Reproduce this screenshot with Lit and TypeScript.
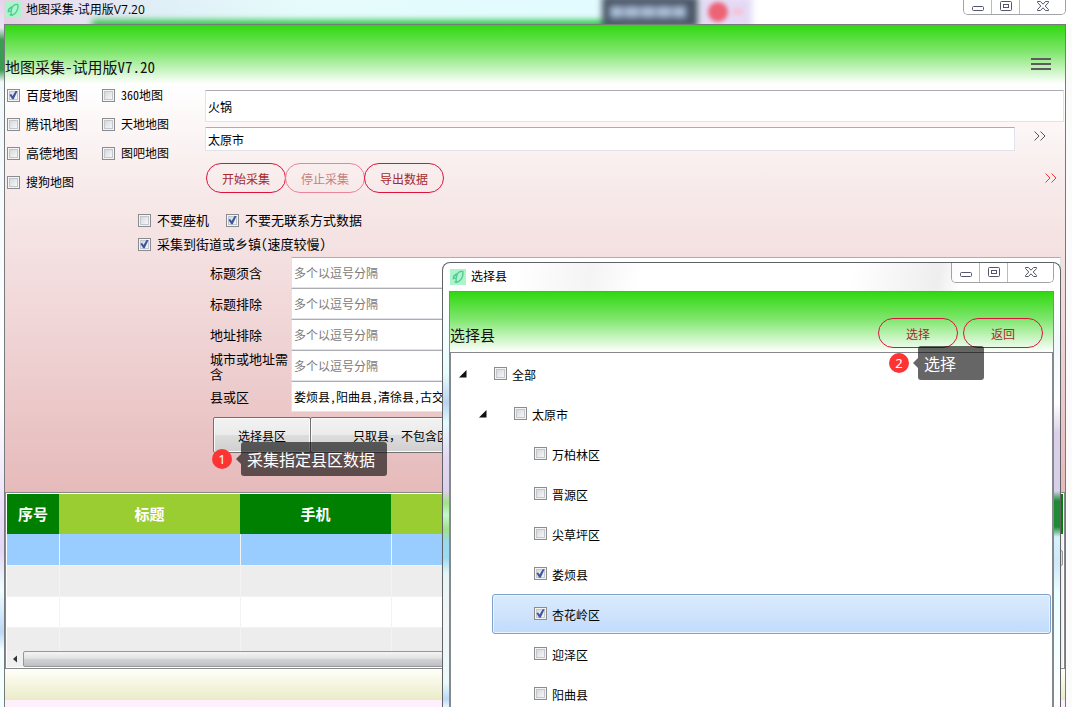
import { LitElement, html, css, svg } from "lit";
import { customElement, property } from "lit/decorators.js";
import { classMap } from "lit/directives/class-map.js";

const FONT = css`"Noto Sans CJK SC", "Liberation Sans", sans-serif`;

const controls = css`
  * { box-sizing: border-box; }
  button { font: inherit; color: inherit; margin: 0; padding: 0; border: 0; background: none; }
  .check { display: inline-flex; align-items: center; gap: 6px; white-space: nowrap; }
  .check input {
    appearance: none; flex: none; position: relative; width: 13px; height: 13px; margin: 0;
    border: 1px solid #8b8c8d; box-shadow: inset 0 0 0 1px #f4f4f4, inset 0 0 0 2px #c3c7cd;
    background: linear-gradient(135deg, #ccd0d6, #f8f8f8 85%);
  }
  .check input:checked::before {
    content: ""; position: absolute; inset: 1px; background: #3f55a0;
    clip-path: polygon(4% 48%, 24% 40%, 40% 62%, 74% 4%, 96% 4%, 52% 98%, 36% 98%);
  }
  .pill {
    width: 80px; height: 30px; border: 1px solid #dc143c; border-radius: 15px;
    color: #a52a2a; font-size: 12px; line-height: 16px; padding-top: 2px;
  }
  .pill:disabled { border-color: #ec8398; color: #c87f7f; }
  .head {
    display: flex; align-items: center; padding-top: 26px;
    background: linear-gradient(#30d810, #7fe66d 45%, #fff); font-size: 15px; line-height: 34px;
    font-feature-settings: "hwid";
  }
  .head h1, .head h2 { flex: 1; margin: 0; font: inherit; color: #111; }
  .callout { position: absolute; display: flex; align-items: center; pointer-events: none; }
  .num {
    width: 20px; height: 20px; border-radius: 10px; background: #fc3434; color: #fff;
    font: 13px/20px "Noto Sans", sans-serif; text-align: center;
  }
  .tail { margin-left: 4px; border: 5px solid transparent; border-left: 0; border-right-color: rgba(0,0,0,.6); }
  .tip {
    min-width: 66px; height: 34px; padding: 0 12px 0 6px; border-radius: 3px; background: rgba(0,0,0,.6); color: #fff;
    font-size: 16px; line-height: 34px; white-space: nowrap;
  }
`;

const callout = (n: number, text: string) => html`
  <div class="callout"><span class="num">${n}</span><span class="tail"></span><span class="tip">${text}</span></div>`;

@customElement("window-bar")
class WindowBar extends LitElement {
  @property() heading = "";
  static styles = css`
    * { box-sizing: border-box; }
    :host { display: flex; align-items: flex-start; color: #000; }
    .app { width: 16px; height: 16px; margin-top: 2px; flex: none; }
    .name { flex: 1; margin-left: 5px; font: 12px/19px "Open Sans", ${FONT}; }
    :host([framed]) .app { margin-top: 6px; }
    :host([framed]) .name { padding-top: 4px; }
    .set { display: flex; height: 100%; border: 1px solid #a3a3a7; border-top: 0; border-radius: 0 0 5px 5px; overflow: hidden; }
    button { width: 28px; padding: 0; border: 0; border-right: 1px solid #bbb; background: rgba(255,255,255,.6); display: grid; place-items: center; }
    button:last-child { width: 45px; border-right: 0; }
    svg { display: block; }
  `;
  render() {
    return html`
      <svg class="app" viewBox="0 0 16 16"><rect width="16" height="16" fill="#adf4ca"/>
        <path d="M12.800 2.500C9.500 1.800 7 4.200 6.400 7.600C5.900 10.400 5.600 12.800 7.200 13.200C10.800 12.400 13.800 7 12.800 2.500ZM6.800 4.600L3.600 7.400L3.400 9.600L5.200 8.800M4.600 12.800L6.600 13.200" fill="none" stroke="#4fcb93" stroke-width="1.400"/></svg>
      <span class="name">${this.heading}</span>
      <div class="set">
        <button aria-label="最小化"><svg width="14" height="14"><rect x="1.5" y="6.500" width="11" height="4" rx="1" fill="#fff" stroke="#53566b"/></svg></button>
        <button aria-label="最大化"><svg width="14" height="14"><rect x="1.500" y="1.500" width="11" height="9" rx="1" fill="#fff" stroke="#53566b"/><rect x="4.500" y="4.500" width="5" height="3" fill="#fff" stroke="#53566b"/></svg></button>
        <button aria-label="关闭"><svg width="14" height="14"><path d="M1.500 1.500H4.500L7 4.200L9.500 1.500H12.500V2.500L9.200 6L12.500 9.500V10.500H9.500L7 7.800L4.500 10.500H1.500V9.500L4.800 6L1.500 2.500Z" fill="#fff" stroke="#53566b"/></svg></button>
      </div>`;
  }
}

interface Node { name: string; level: number; open?: boolean; checked?: boolean; selected?: boolean; }

const NODES: Node[] = [
  { name: "全部", level: 0, open: true },
  { name: "太原市", level: 1, open: true },
  { name: "万柏林区", level: 2 },
  { name: "晋源区", level: 2 },
  { name: "尖草坪区", level: 2 },
  { name: "娄烦县", level: 2, checked: true },
  { name: "杏花岭区", level: 2, checked: true, selected: true },
  { name: "迎泽区", level: 2 },
  { name: "阳曲县", level: 2 },
];

@customElement("county-dialog")
class CountyDialog extends LitElement {
  static styles = [controls, css`
    :host {
      display: flex; flex-direction: column; padding: 0 6px; overflow: hidden;
      border: 1px solid #5f6368; border-bottom: 0; border-radius: 8px 8px 0 0; font-family: ${FONT};
      background:
        linear-gradient(100deg, #fff 12%, #f4f4f4 24%, #fff 32%, #fff 66%, #eee 80%, #fff 84%) top / 100% 28px no-repeat,
        linear-gradient(#fff 30px, #e8fdfd 110px, #b8d4f0 140px, #e4fbff 160px, #e3d8f2 195px, #ddd0ec 228px, #9fe287 240px, #c6f8d2 252px, #9fe287 266px, #98d9f0 280px, #9cdaf0 295px, #e4f5f5 310px, #f4f4f4 350px, #eafafa 420px, #bcd8f6 436px, #f6ffff 446px) left / 50% 100% no-repeat,
        linear-gradient(#fff 30px, #f2f9fb 80px, #fff 140px, #dcd0e8 170px, #d8cfe8 228px, #1f8a36 238px, #1f8a36 264px, #d5f2fa 274px, #cfe8f8 300px, #eaffff 330px, #fff 440px) right / 50% 100% no-repeat;
    }
    window-bar { flex: none; height: 20px; margin-bottom: 8px; padding-left: 1px; }
    .client { flex: 1; min-height: 0; display: flex; flex-direction: column; border: 1px solid #85888c; border-bottom: 0; }
    .head { flex: none; padding-right: 10px; gap: 5px; position: relative; }
    .head .pill { margin-bottom: 4px; }
    .callout { right: 68px; top: 54px; }
    .tree {
      flex: 1; min-height: 0; overflow: hidden; margin: 0; padding: 1px 1px 0; list-style: none;
      border: 1px solid #85888c; border-bottom: 0; background: #fff; font-size: 12px; line-height: 16px;
    }
    .row { display: flex; align-items: center; height: 40px; padding-left: 6px; border: 1px solid transparent; }
    .l1 { margin-left: 20px; }
    .l2 { margin-left: 40px; }
    .selected { border-color: #7da2ce; border-radius: 3px; background: linear-gradient(#dcebfd, #c1dbfc); box-shadow: inset 0 0 0 1px #ebf4fe; }
    .toggle { width: 35px; display: flex; }
    .row .check { align-items: flex-start; gap: 5px; }
    .row .check input { margin-top: 2px; }
    .row .check span { padding-top: 2px; }
    .head .callout { right: auto; left: calc(100% - 164px); }
  `];
  render() {
    return html`
      <window-bar framed heading="选择县"></window-bar>
      <div class="client">
        <div class="head"><h2>选择县</h2>
          <button class="pill">选择</button><button class="pill">返回</button>
          ${callout(2, "选择")}
        </div>
        <ul class="tree">
          ${NODES.map(n => html`
            <li class=${classMap({ row: true, l1: n.level === 1, l2: n.level === 2, selected: !!n.selected })}>
              <span class="toggle">${n.open ? html`<svg width="8" height="8"><path d="M7.500 0V7.500H0Z" fill="#111"/></svg>` : ""}</span>
              <label class="check"><input type="checkbox" .checked=${!!n.checked}><span>${n.name}</span></label>
            </li>`)}
        </ul>
      </div>`;
  }
}

const MAPS = [
  { name: "百度地图", checked: true }, { name: "360地图", small: true },
  { name: "腾讯地图" }, { name: "天地地图", small: true },
  { name: "高德地图" }, { name: "图吧地图", small: true },
  { name: "搜狗地图", small: true },
];
const FILTERS = ["标题须含", "标题排除", "地址排除", "城市或地址需含"];

const chevrons = svg`<path d="M0.500 0.500L5 5L0.500 9.500M6.500 0.500L11 5L6.500 9.500" fill="none" stroke="currentColor"/>`;

@customElement("app-root")
class AppRoot extends LitElement {
  static styles = [controls, css`
    :host {
      display: flex; flex-direction: column; position: relative; height: 100vh; overflow: hidden;
      padding: 0 6px 0 4px; font-family: ${FONT}; color: #000;
      background:
        linear-gradient(#e6d3ea, #e9e4f4 28px, #3a9c50 40px, #3a9c50 70px, #f2f9fb 82px, #fff 400px, #e4d6f6 550px, #f0ffff 590px, #bcd8f6 632px, #f4ffff 650px) left / 4px 100% no-repeat,
        linear-gradient(90deg, #e2cfe2, #e9e0f0 60px, #dfeff6 160px, #e6fbfc 300px, #e2fbff 590px, #fff 760px) top / 100% 24px no-repeat,
        #fbfbfb;
    }
    .backdrop { position: absolute; inset: 0 0 auto; height: 24px; overflow: hidden; }
    .backdrop i { position: absolute; filter: blur(3px); }
    .strip { left: 92px; width: 530px; top: 20px; height: 10px; background: #2fc84a; }
    .dark { left: 602px; width: 96px; top: -4px; height: 32px; background: #4b5768; }
    .words { left: 610px; width: 76px; top: 6px; height: 12px; background: repeating-linear-gradient(90deg, #a9bdd6 0 12px, #8c9cb4 12px 16px); }
    .lilac { left: 700px; width: 52px; top: -4px; height: 32px; background: #e5daf6; }
    .dot { left: 708px; width: 20px; top: 2px; height: 20px; border-radius: 10px; background: #ec6375; }
    .mark { left: 733px; width: 10px; top: 8px; height: 7px; background: #f3c3d6; }
    .backdrop .dot, .backdrop .mark { filter: blur(2px); }
    .titlebar { position: relative; flex: none; height: 15px; margin-bottom: 9px; padding-left: 1px; }
    .client { flex: 1; min-height: 0; position: relative; display: flex; flex-direction: column; border: 1px solid #777a7d; border-bottom: 0; background: #fdeffc; }
    .client > * { flex: none; }
    .client > .head { padding: 25px 14px 0 0; }
    .menu { display: grid; gap: 3px; width: 20px; margin-bottom: 6px; }
    .menu i { height: 2px; background: #5c5c5c; }
    .body { padding-bottom: 39px; background: linear-gradient(#fff, #f8ebeb 24%, #f0d5d6 60%, #e6babb); }
    .search { display: flex; }
    .maps { width: 200px; padding-left: 2px; display: grid; grid-template-columns: 95px 1fr; grid-auto-rows: 22px; row-gap: 7px; font-size: 13px; line-height: 18px; font-feature-settings: "hwid"; }
    .small { font-size: 12px; }
    .fields { flex: 1; padding: 6px 1px 0 0; }
    input.text {
      display: block; width: 100%; min-width: 0; height: 32px; margin: 0; padding: 0 2px; border: 1px solid #e2e3ea; border-top-color: #abadb3;
      border-radius: 1px; background: #fff; font: 12px/16px ${FONT}; font-feature-settings: "hwid"; outline: 0; color: #000;
    }
    input.text::placeholder { color: #7b7b7b; opacity: 1; }
    .city { display: flex; margin-top: 5px; }
    .city input.text { height: 24px; }
    .more { flex: none; width: 49px; height: 18px; display: grid; place-items: center; color: #555; }
    .actions { display: flex; align-items: center; margin-top: 12px; padding-left: 1px; }
    .actions .pill + .pill { margin-left: -1px; }
    .actions .more { width: 26px; margin-left: auto; color: #f33; }
    .options { margin-top: 15px; padding-left: 133px; font-size: 13px; line-height: 18px; font-feature-settings: "hwid"; }
    .line { display: flex; gap: 17px; height: 24px; }
    .filters { display: grid; grid-template-columns: 81px 1fr; grid-auto-rows: 31px; margin-top: 1px; padding: 0 4px 0 205px; align-items: center; font-size: 13px; line-height: 15px; }
    .filters input.text { height: 31px; }
    .pick { position: relative; display: flex; margin-top: 5px; padding-left: 208px; font-size: 12px; }
    .pick button { width: 98px; height: 36px; border: 1px solid #707070; border-radius: 2px; background: linear-gradient(#f2f2f2, #ebebeb 50%, #ddd 50%, #cfcfcf); box-shadow: inset 0 0 0 1px #fbfbfb; }
    .pick button + button { width: 182px; margin-left: -1px; }
    .pick .callout { left: 207px; top: 25px; }
    .grid { position: relative; height: 177px; padding: 1px; border: 1px solid #85888c; background: #fff; display: flex; flex-direction: column; }
    .rows { flex: 1; min-height: 0; overflow: hidden; }
    table { width: 100%; border-collapse: collapse; table-layout: fixed; }
    th { height: 40px; padding: 0; font-size: 15px; line-height: 20px; color: #fff; background: #9acd32; }
    th:nth-child(odd) { background: #008000; }
    .c1 { width: 52px; } .c2 { width: 181px; } .c3 { width: 151px; } .c4 { width: 240px; }
    td { height: 31px; padding: 0; border-right: 1px solid #f3f3f3; border-bottom: 1px solid #f3f3f3; }
    tr:nth-child(even) td { background: #ededed; }
    tr.current td { background: #99ccff; }
    .hbar { flex: none; display: flex; height: 16px; background: #f0f0f0; }
    .hbar svg { width: 16px; height: 16px; }
    .thumb { flex: 1; margin-right: 33px; border: 1px solid #979797; border-radius: 2px; background: linear-gradient(#f4f4f4, #e3e3e4 45%, #d2d3d5 50%, #bfc0c3); }
    .vbar { position: absolute; right: 1px; top: 41px; bottom: 17px; width: 17px; padding-top: 16px; background: #f0f0f0; }
    .vbar i { display: block; height: 16px; border: 1px solid #979797; border-radius: 2px; background: #dcdcdc; }
    .foot { height: 31px; background: linear-gradient(#fffff8, #ebebc9); }
    county-dialog { position: absolute; left: 442px; right: 11px; top: 262px; bottom: 0; }
  `];
  render() {
    return html`
      <div class="backdrop"><i class="strip"></i><i class="lilac"></i><i class="dark"></i><i class="words"></i><i class="dot"></i><i class="mark"></i></div>
      <window-bar class="titlebar" heading="地图采集-试用版V7.20"></window-bar>
      <div class="client">
        <div class="head"><h1>地图采集-试用版V7.20</h1><button class="menu" aria-label="菜单"><i></i><i></i><i></i></button></div>
        <div class="body">
          <div class="search">
            <div class="maps">
              ${MAPS.map(m => html`<label class=${classMap({ check: true, small: !!m.small })}><input type="checkbox" .checked=${!!m.checked}>${m.name}</label>`)}
            </div>
            <div class="fields">
              <input class="text" aria-label="关键词" .value=${"火锅"}>
              <div class="city"><input class="text" aria-label="城市" .value=${"太原市"}>
                <button class="more" aria-label="更多城市"><svg width="12" height="10">${chevrons}</svg></button></div>
              <div class="actions">
                <button class="pill">开始采集</button><button class="pill" disabled>停止采集</button><button class="pill">导出数据</button>
                <button class="more" aria-label="更多"><svg width="12" height="10">${chevrons}</svg></button>
              </div>
            </div>
          </div>
          <div class="options">
            <div class="line">
              <label class="check"><input type="checkbox">不要座机</label>
              <label class="check"><input type="checkbox" checked>不要无联系方式数据</label>
            </div>
            <div class="line"><label class="check"><input type="checkbox" checked>采集到街道或乡镇(速度较慢)</label></div>
          </div>
          <div class="filters">
            ${FILTERS.map((f, i) => html`<label for="f${i}">${f}</label><input class="text" id="f${i}" placeholder="多个以逗号分隔">`)}
            <label for="county">县或区</label><input class="text" id="county" .value=${"娄烦县,阳曲县,清徐县,古交市"}>
          </div>
          <div class="pick">
            <button>选择县区</button><button>只取县，不包含区</button>
            ${callout(1, "采集指定县区数据")}
          </div>
        </div>
        <div class="grid">
          <div class="rows">
            <table>
              <thead><tr><th class="c1">序号</th><th class="c2">标题</th><th class="c3">手机</th><th class="c4"></th><th></th></tr></thead>
              <tbody>${[0, 1, 2, 3].map(r => html`<tr class=${r === 0 ? "current" : ""}><td></td><td></td><td></td><td></td><td></td></tr>`)}</tbody>
            </table>
          </div>
          <div class="hbar"><svg viewBox="0 0 16 16"><path d="M10 4.500V11.500L6 8Z" fill="#333"/></svg><div class="thumb"></div></div>
          <div class="vbar"><i></i></div>
        </div>
        <div class="foot"></div>
      </div>
      <county-dialog></county-dialog>`;
  }
}
